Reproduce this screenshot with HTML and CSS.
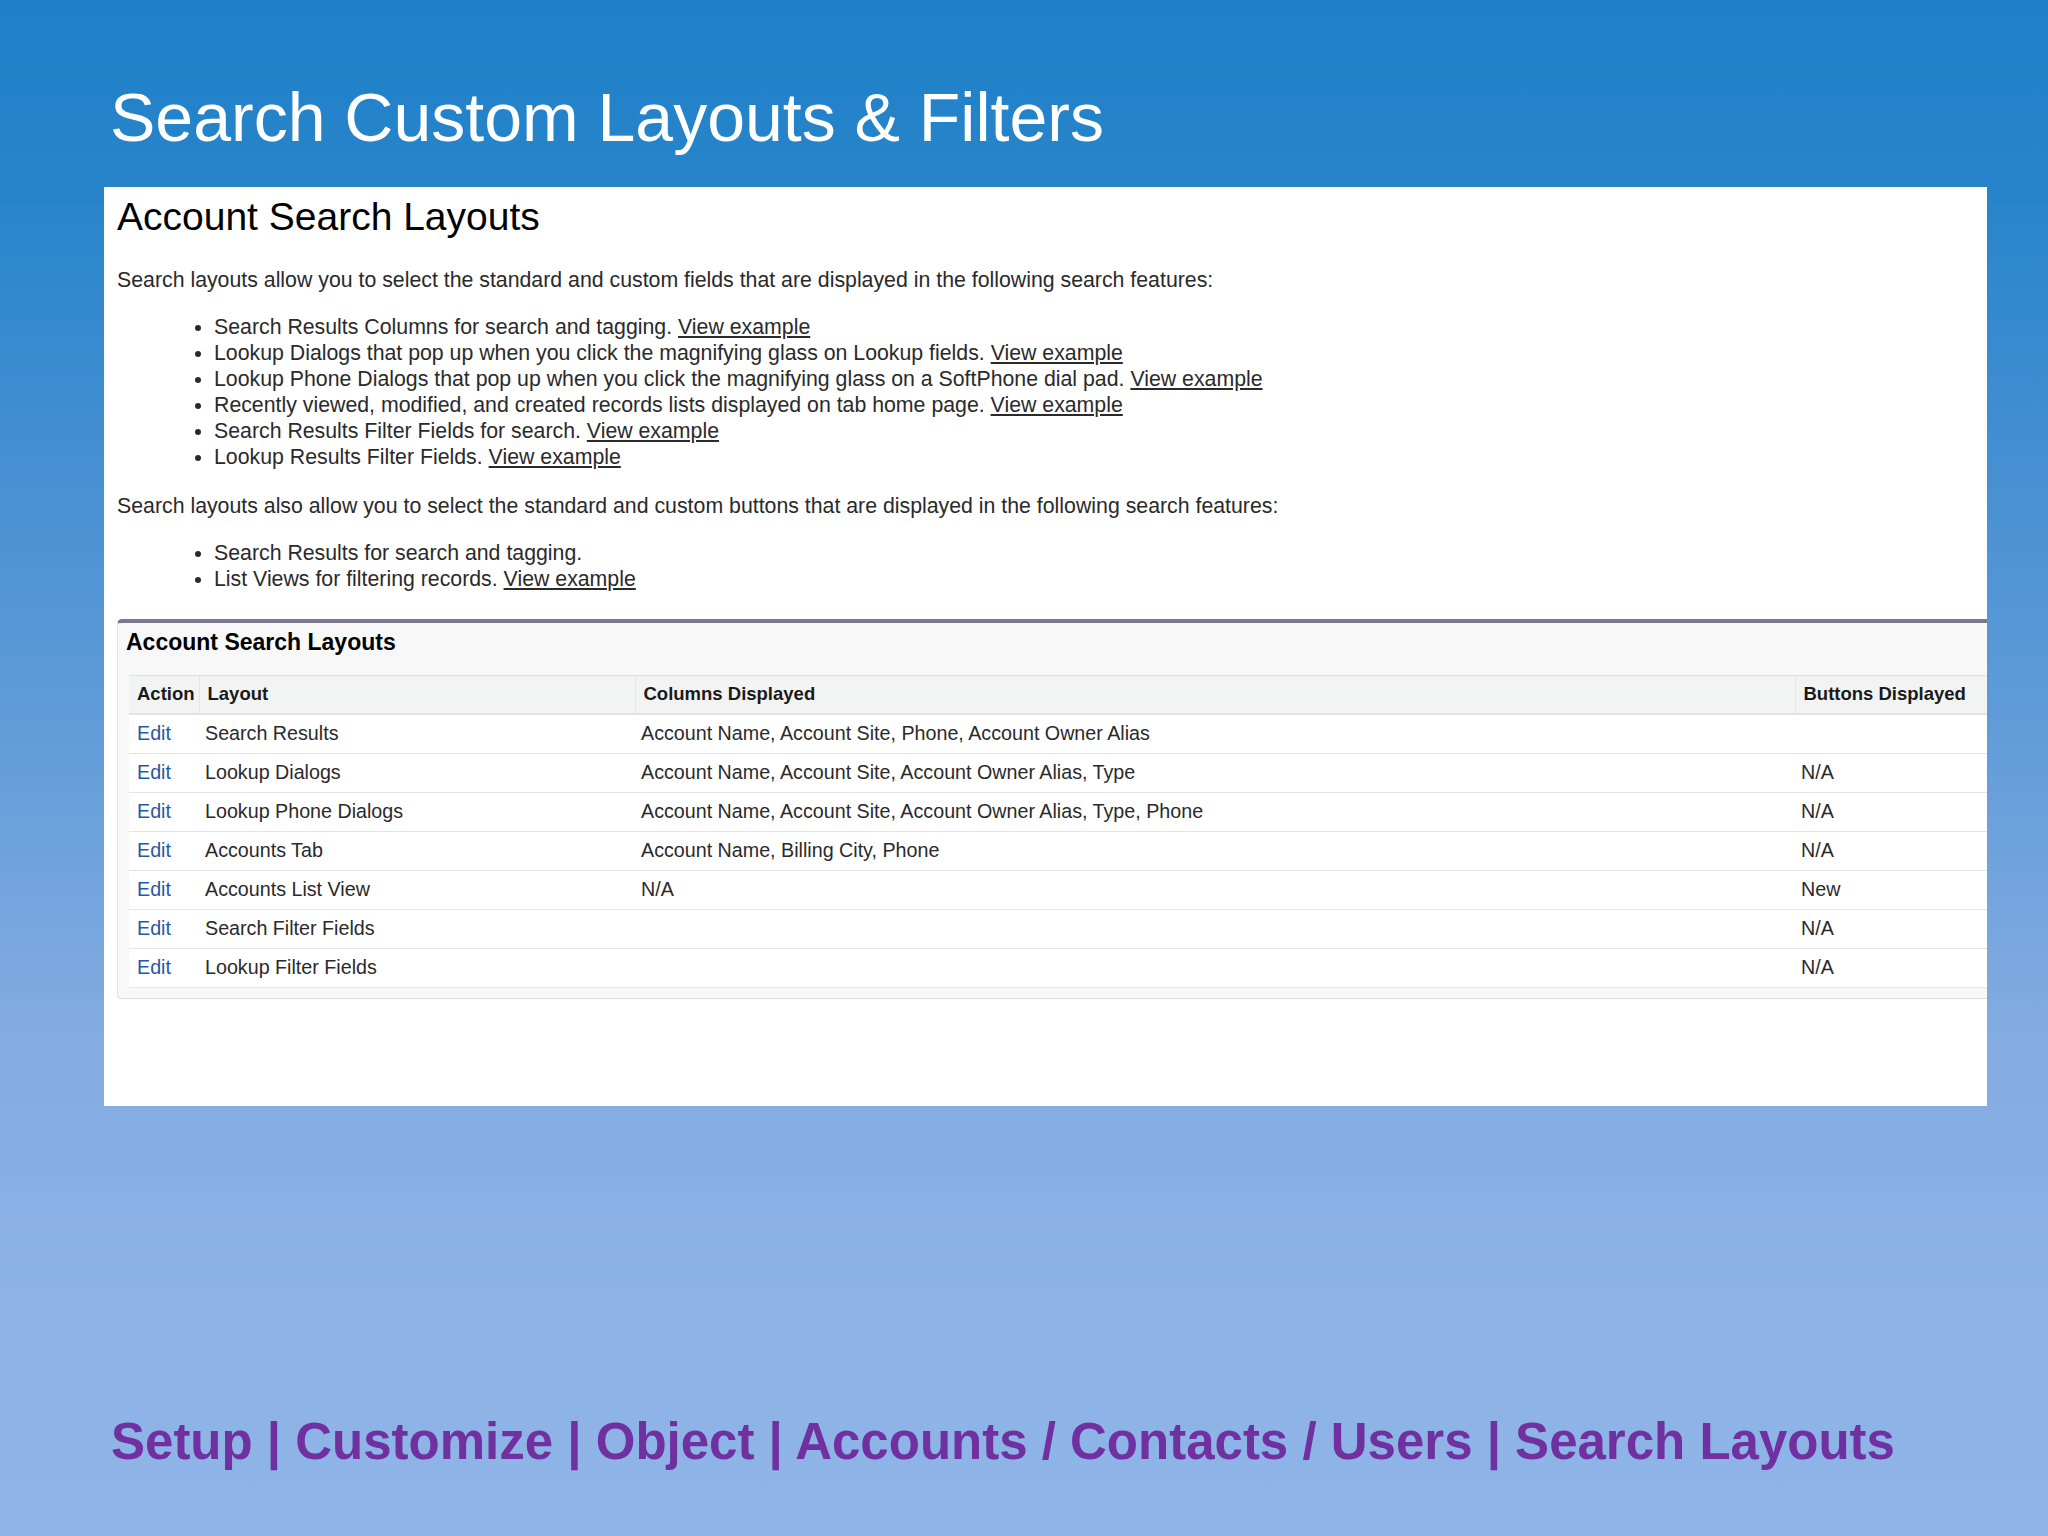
FILE: index.html
```html
<!DOCTYPE html>
<html>
<head>
<meta charset="utf-8">
<title>Search Custom Layouts &amp; Filters</title>
<link rel="stylesheet" href="styles.css">
</head>
<body>
<div class="slide">
  <h1 class="slide-title">Search Custom Layouts &amp; Filters</h1>
  <div class="panel">
    <h2 class="page-heading">Account Search Layouts</h2>
    <p class="intro">Search layouts allow you to select the standard and custom fields that are displayed in the following search features:</p>
    <ul class="features">
      <li>Search Results Columns for search and tagging. <a class="ex">View example</a></li>
      <li>Lookup Dialogs that pop up when you click the magnifying glass on Lookup fields. <a class="ex">View example</a></li>
      <li>Lookup Phone Dialogs that pop up when you click the magnifying glass on a SoftPhone dial pad. <a class="ex">View example</a></li>
      <li>Recently viewed, modified, and created records lists displayed on tab home page. <a class="ex">View example</a></li>
      <li>Search Results Filter Fields for search. <a class="ex">View example</a></li>
      <li>Lookup Results Filter Fields. <a class="ex">View example</a></li>
    </ul>
    <p class="intro second">Search layouts also allow you to select the standard and custom buttons that are displayed in the following search features:</p>
    <ul class="features">
      <li>Search Results for search and tagging.</li>
      <li>List Views for filtering records. <a class="ex">View example</a></li>
    </ul>
    <div class="box">
      <div class="box-title">Account Search Layouts</div>
      <table class="grid">
        <colgroup>
          <col class="c-action"><col class="c-layout"><col class="c-cols"><col class="c-btns">
        </colgroup>
        <thead>
          <tr><th>Action</th><th>Layout</th><th>Columns Displayed</th><th>Buttons Displayed</th></tr>
        </thead>
        <tbody>
          <tr><td><a class="edit">Edit</a></td><td>Search Results</td><td>Account Name, Account Site, Phone, Account Owner Alias</td><td></td></tr>
          <tr><td><a class="edit">Edit</a></td><td>Lookup Dialogs</td><td>Account Name, Account Site, Account Owner Alias, Type</td><td>N/A</td></tr>
          <tr><td><a class="edit">Edit</a></td><td>Lookup Phone Dialogs</td><td>Account Name, Account Site, Account Owner Alias, Type, Phone</td><td>N/A</td></tr>
          <tr><td><a class="edit">Edit</a></td><td>Accounts Tab</td><td>Account Name, Billing City, Phone</td><td>N/A</td></tr>
          <tr><td><a class="edit">Edit</a></td><td>Accounts List View</td><td>N/A</td><td>New</td></tr>
          <tr><td><a class="edit">Edit</a></td><td>Search Filter Fields</td><td></td><td>N/A</td></tr>
          <tr><td><a class="edit">Edit</a></td><td>Lookup Filter Fields</td><td></td><td>N/A</td></tr>
        </tbody>
      </table>
    </div>
  </div>
  <div class="crumbs">Setup | Customize | Object | Accounts / Contacts / Users | Search Layouts</div>
</div>
</body>
</html>
```
FILE: styles.css
```css
html, body {
  margin: 0;
  padding: 0;
}
body {
  width: 2048px;
  height: 1536px;
  overflow: hidden;
  font-family: "Liberation Sans", Arial, sans-serif;
  background: linear-gradient(180deg, #1e81c8 0%, #2784ca 12%, #5596d6 40%, #84ace1 68%, #8db3e6 85%, #8fb4e7 100%);
}
.slide {
  width: 2048px;
  height: 1536px;
  display: flex;
  flex-direction: column;
}
.slide-title {
  margin: 83px 0 0 110px;
  font-size: 68px;
  line-height: 68px;
  font-weight: normal;
  color: #ffffff;
}
.panel {
  margin: 36px 0 0 104px;
  width: 1883px;
  height: 919px;
  box-sizing: border-box;
  background: #ffffff;
  padding: 6px 0 0 13px;
  color: #2a2a2a;
}
.page-heading {
  margin: 0;
  font-size: 39px;
  line-height: 47px;
  font-weight: normal;
  color: #000;
}
.intro {
  margin: 27px 0 0 0;
  font-size: 21.3px;
  line-height: 26px;
}
.intro.second {
  margin-top: 22px;
}
.features {
  margin: 21px 0 0 0;
  padding: 0 0 0 97px;
  font-size: 21.3px;
  line-height: 26.1px;
}
.ex {
  color: #2a2a2a;
  text-decoration: underline;
}
.box {
  margin-top: 27px;
  background: #f8f8f8;
  border-top: 4px solid #777b8c;
  border-left: 1px solid #e2e2e2;
  border-bottom: 1px solid #dadada;
  border-top-left-radius: 5px;
  border-bottom-left-radius: 4px;
  padding: 4px 0 10px 0;
}
.box-title {
  padding-left: 8px;
  font-size: 23px;
  line-height: 30px;
  font-weight: bold;
  color: #000;
}
.grid {
  margin: 18px 0 0 11px;
  border-collapse: collapse;
  table-layout: fixed;
  width: 1858px;
  background: #fff;
}
.c-action { width: 70px; }
.c-layout { width: 436px; }
.c-cols { width: 1160px; }
.c-btns { width: 192px; }
.grid th {
  height: 37px;
  padding: 0 0 0 8px;
  text-align: left;
  font-size: 18.5px;
  font-weight: bold;
  color: #1a1a1a;
  background: #f2f3f3;
  border-top: 1px solid #e0e0e0;
  border-bottom: 2px solid #e3e3e3;
  border-left: 1px solid #e4e4e4;
}
.grid th:first-child {
  border-left: none;
  padding-left: 8px;
}
.grid td {
  height: 38px;
  padding: 0 0 0 6px;
  font-size: 19.7px;
  color: #2a2a2a;
  border-bottom: 1px solid #e5e5e5;
  white-space: nowrap;
}
.grid td:first-child {
  padding-left: 8px;
}
.edit {
  color: #1f5aa3;
}
.crumbs {
  margin: 306px 0 0 111px;
  font-size: 51px;
  line-height: 60px;
  font-weight: bold;
  color: #7030a0;
  white-space: nowrap;
}
```
